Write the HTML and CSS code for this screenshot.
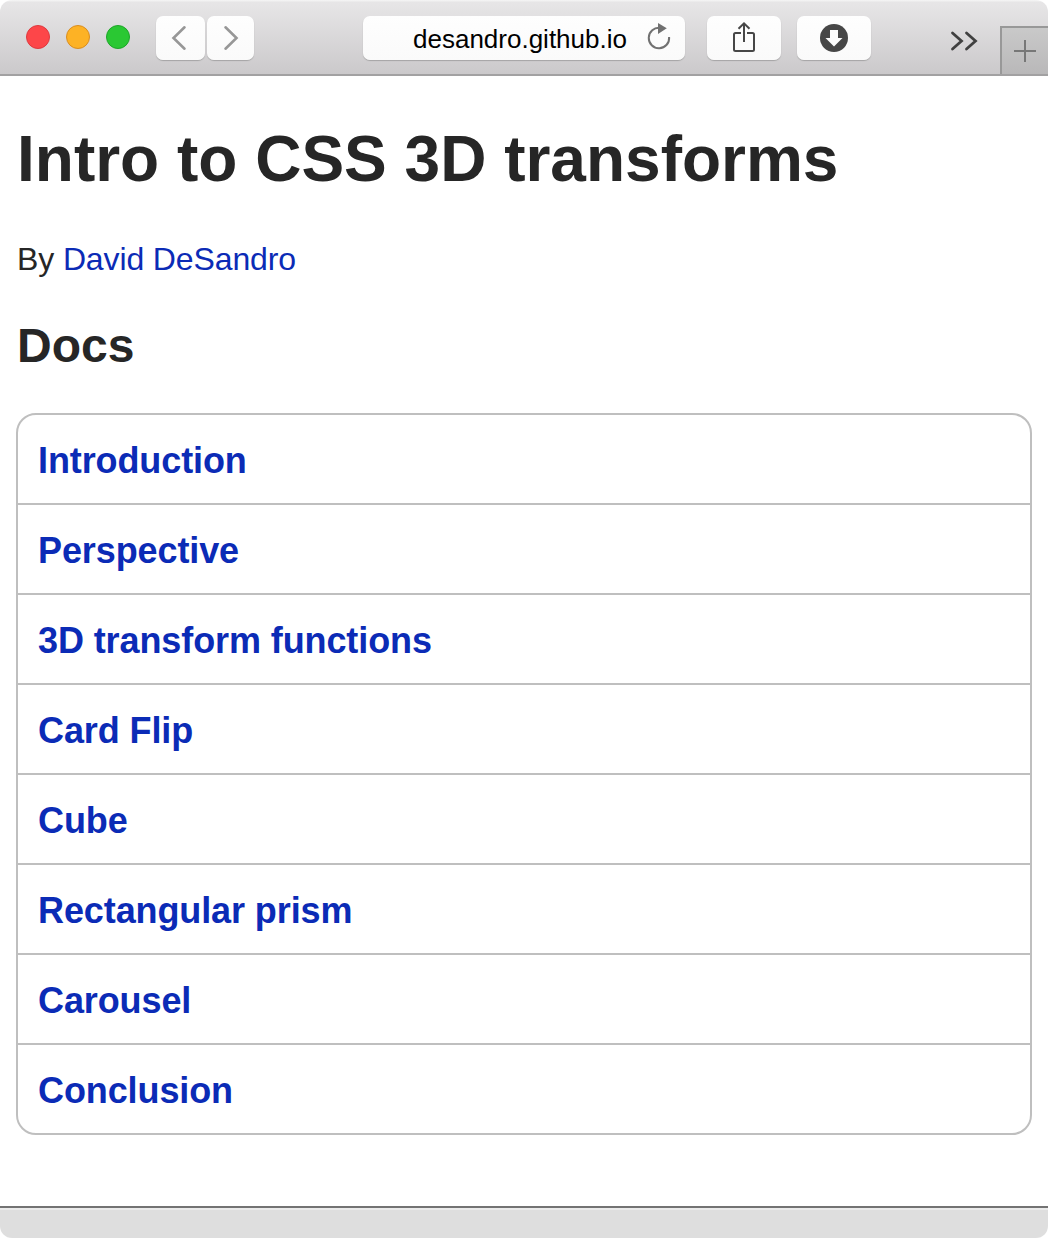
FILE: index.html
```html
<!DOCTYPE html>
<html lang="en">
<head>
<meta charset="utf-8">
<title>Intro to CSS 3D transforms</title>
<link rel="stylesheet" href="styles.css">
</head>
<body>
<div class="window">
  <header class="toolbar">
    <div class="lights">
      <span class="light light-close"></span>
      <span class="light light-minimize"></span>
      <span class="light light-zoom"></span>
    </div>
    <div class="nav">
      <span class="button button-back">
        <svg width="49" height="44" viewBox="0 0 49 44"><path d="M28.5 11.3 17.5 22l11 10.700" fill="none" stroke="#979797" stroke-width="2.6" stroke-linecap="round"/></svg>
      </span>
      <span class="button button-forward">
        <svg width="47" height="44" viewBox="0 0 47 44"><path d="M18.5 11.3 29.5 22l-11 10.700" fill="none" stroke="#979797" stroke-width="2.6" stroke-linecap="round"/></svg>
      </span>
    </div>
    <div class="button address">
      <span class="url">desandro.github.io</span>
      <svg class="reload" width="26" height="30" viewBox="0 0 26 30"><path d="M13 4.900A10.200 10.200 0 1 0 22.100 14" fill="none" stroke="#717171" stroke-width="2"/><path d="M11 0 19.800 5.300 11 11z" fill="#717171"/></svg>
    </div>
    <div class="button action action-share">
      <svg width="74" height="44" viewBox="0 0 74 44"><path d="M34 17h-5.500q-1.500 0-1.500 1.500v15q0 1.500 1.500 1.500h17q1.500 0 1.500-1.500v-15q0-1.500-1.500-1.500H40M37 26V7.500M31.500 12.800 37 7.300l5.500 5.500" fill="none" stroke="#474747" stroke-width="2"/></svg>
    </div>
    <div class="button action">
      <svg width="74" height="44" viewBox="0 0 74 44"><circle cx="37" cy="22" r="14" fill="#474747"/><path d="M33 14h8v8h4.500L37 30.500 28.500 22H33z" fill="#fcfcfc"/></svg>
    </div>
    <svg class="more" width="28" height="20" viewBox="0 0 28 20"><path d="M2.500 2 11.500 10 2.500 18M16.500 2 25.500 10 16.500 18" fill="none" stroke="#404040" stroke-width="2.800" stroke-linecap="round"/></svg>
    <div class="new-tab">
      <svg width="46" height="46" viewBox="0 0 46 46"><path d="M12 23h22M23 12v22" fill="none" stroke="#777" stroke-width="2"/></svg>
    </div>
  </header>
  <main class="page">
    <h1 class="title">Intro to CSS 3D transforms</h1>
    <p class="byline">By <a class="link" href="#">David DeSandro</a></p>
    <h2 class="subtitle">Docs</h2>
    <ul class="docs">
      <li class="doc"><a class="link" href="#">Introduction</a></li>
      <li class="doc"><a class="link" href="#">Perspective</a></li>
      <li class="doc"><a class="link" href="#">3D transform functions</a></li>
      <li class="doc"><a class="link" href="#">Card Flip</a></li>
      <li class="doc"><a class="link" href="#">Cube</a></li>
      <li class="doc"><a class="link" href="#">Rectangular prism</a></li>
      <li class="doc"><a class="link" href="#">Carousel</a></li>
      <li class="doc"><a class="link" href="#">Conclusion</a></li>
    </ul>
  </main>
  <footer class="statusbar"></footer>
</div>
</body>
</html>
```
FILE: styles.css
```css
* {
  box-sizing: border-box;
}

body {
  margin: 0;
  background: #fff;
  color: #262626;
  font-family: "Liberation Sans", Arial, sans-serif;
}

.window {
  display: flex;
  flex-direction: column;
  height: 1238px;
  overflow: hidden;
  border-radius: 12px;
  background: #fff;
}

.toolbar {
  display: flex;
  flex: none;
  align-items: flex-start;
  height: 76px;
  border-bottom: 2px solid #a2a1a2;
  background: linear-gradient(#f4f4f4 0, #f1f1f1 1px, #e7e6e7 2px, #cbc9cb 74px);
}

.toolbar svg {
  display: block;
}

.lights {
  display: flex;
  gap: 16px;
  margin: 25px 26px 0;
}

.light {
  width: 24px;
  height: 24px;
  border: 1px solid;
  border-radius: 50%;
}

.light-close {
  border-color: #dd3a3f;
  background: #fd4649;
}

.light-minimize {
  border-color: #d98d21;
  background: #fdb225;
}

.light-zoom {
  border-color: #1ea529;
  background: #2ac833;
}

.nav {
  display: flex;
  gap: 2px;
  margin-top: 16px;
}

.button {
  height: 44px;
  border-radius: 7px;
  background: linear-gradient(#fefefe, #fafafa);
  box-shadow: 0 1px 1px #a5a4a5;
}

.button-back {
  width: 49px;
}

.button-forward {
  width: 47px;
}

.address {
  display: flex;
  width: 322px;
  margin: 16px 0 0 109px;
  padding-left: 50px;
}

.url {
  width: 234px;
  color: #000;
  font-size: 26px;
  line-height: 46px;
}

.reload {
  margin-top: 7px;
}

.action {
  width: 74px;
  margin: 16px 16px 0 0;
}

.action-share {
  margin-left: 22px;
}

.more {
  margin: 31px 22px 0 63px;
}

.new-tab {
  width: 48px;
  height: 48px;
  margin-top: 26px;
  border: solid #989898;
  border-width: 2px 0 0 2px;
  background: linear-gradient(#c9c9c9, #b9b8b9);
}

.page {
  flex: 1;
  padding: 47px 16px 0;
}

.title {
  margin: 0 0 44px;
  padding-left: 1px;
  font-size: 64px;
  line-height: 72px;
}

.byline {
  margin: 0 0 39px;
  padding-left: 1px;
  font-size: 32px;
  letter-spacing: -0.12px;
  line-height: 40px;
}

.subtitle {
  margin: 0 0 39px;
  padding-left: 1px;
  font-size: 48px;
  line-height: 56px;
}

.link {
  color: #0b2bb6;
  text-decoration: none;
}

.docs {
  margin: 0;
  padding: 0;
  border: 2px solid #bfbfbf;
  border-radius: 20px;
  list-style: none;
}

.doc {
  height: 90px;
  padding: 2px 20px 0;
  border-bottom: 2px solid #bfbfbf;
  font-size: 36px;
  font-weight: bold;
  letter-spacing: -0.1px;
  line-height: 88px;
}

.doc:last-child {
  height: 88px;
  border-bottom: 0;
}

.statusbar {
  flex: none;
  height: 32px;
  border-top: 2px solid #737373;
  background: linear-gradient(#ebebeb 2px, #dedede 2px);
}
```
